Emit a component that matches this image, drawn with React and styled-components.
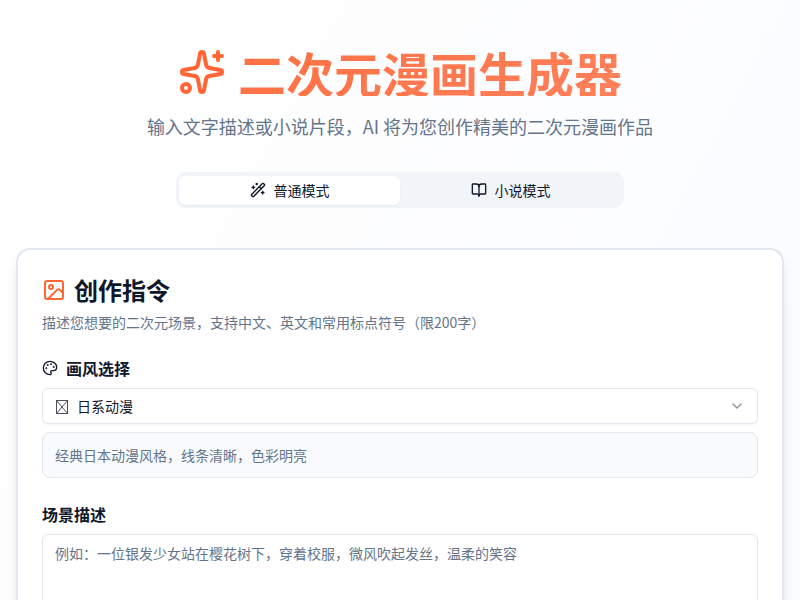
import React from "react";
import styled, { createGlobalStyle } from "styled-components";
import { Sparkles, WandSparkles, BookOpen, Image, Palette, ChevronDown } from "lucide-react";

const Global = createGlobalStyle`
  *, *::before, *::after { box-sizing: border-box; }
  html, body { margin: 0; height: 600px; overflow: hidden; }
  body {
    color: #0f172a;
    background: #fff;
    font-family: "Noto Sans CJK SC", sans-serif;
    font-size: 16px;
    line-height: 24px;
  }
  h1, h2, p { margin: 0; }
  svg { display: block; flex-shrink: 0; }
`;

const Page = styled.div`
  height: 600px;
  overflow: hidden;
  padding: 48px 16px 0;
  background: linear-gradient(to bottom right, #ffffff, #f8fafe) 0 0 / 100% 1500px no-repeat;
`;

const Header = styled.header`
  text-align: center;
`;

const Title = styled.h1`
  display: flex;
  align-items: center;
  justify-content: center;
  gap: 12px;
  height: 48px;
  font-size: 48px;
  line-height: 48px;
  font-weight: 700;
  background: linear-gradient(135deg, #ff6838, #ff8663);
  background-clip: text;
  color: transparent;
  svg { color: #ff6633; }
`;

const Subtitle = styled.p`
  margin-top: 16px;
  font-size: 18px;
  line-height: 28px;
  color: #64748b;
`;

const Tabs = styled.div`
  display: grid;
  grid-template-columns: 1fr 1fr;
  width: 448px;
  height: 36px;
  margin: 32px auto 40px;
  padding: 3.5px 3px 3px;
  border-radius: 10px;
  background: #f1f5f9;
`;

const Tab = styled.button`
  display: flex;
  align-items: center;
  justify-content: center;
  gap: 8px;
  border: 0;
  padding: 0;
  border-radius: 6px;
  font: 400 14px/20px "Noto Sans CJK SC", sans-serif;
  color: #0f172a;
  background: ${(p) => (p.$active ? "#fff" : "transparent")};
  box-shadow: ${(p) => (p.$active ? "0 1px 2px rgba(0,0,0,.06)" : "none")};
`;

const Card = styled.section`
  height: 700px;
  padding: 24px;
  border: 2px solid #e2e8f0;
  border-radius: 14px;
  background: #fff;
  box-shadow: 0 10px 15px -3px rgba(0,0,0,.1), 0 4px 6px -4px rgba(0,0,0,.1);
`;

const CardTitle = styled.h2`
  display: flex;
  align-items: center;
  gap: 8px;
  font-size: 24px;
  line-height: 32px;
  svg { color: #ff6633; }
`;

const CardNote = styled.p`
  margin-top: 6px;
  font-size: 14px;
  line-height: 20px;
  color: #64748b;
`;

const Label = styled.div`
  display: flex;
  align-items: center;
  gap: 8px;
  margin-top: 24px;
  font-weight: 700;
  line-height: 24px;
`;

const Select = styled.button`
  display: flex;
  align-items: center;
  justify-content: space-between;
  width: 100%;
  height: 36px;
  margin-top: 8px;
  padding: 0 12px;
  border: 1px solid #e2e8f0;
  border-radius: 6px;
  background: #fff;
  color: #0f172a;
  font: 400 14px/20px "Noto Sans CJK SC", sans-serif;
  box-shadow: 0 1px 2px rgba(0,0,0,.05);
`;

const Option = styled.span`
  display: flex;
  align-items: center;
  gap: 8px;
`;

const Hint = styled.div`
  height: 46px;
  margin-top: 8px;
  padding: 12px;
  border: 1px solid #e2e8f0;
  border-radius: 8px;
  background: #f8fafc;
  color: #64748b;
  font-size: 14px;
  line-height: 20px;
`;

const TextArea = styled.textarea`
  display: block;
  width: 100%;
  height: 120px;
  margin-top: 8px;
  padding: 8px 12px;
  border: 1px solid #e2e8f0;
  border-radius: 6px;
  resize: none;
  font: 400 14px/20px "Noto Sans CJK SC", sans-serif;
  &::placeholder { color: #64748b; }
`;

const StyleGlyph = () => (
  <svg width="14" height="16" viewBox="0 0 14 16" fill="none" stroke="#0f172a" strokeWidth="0.75">
    <path d="M1.5 2.5h11v13h-11zM1.5 2.5l11 13M12.5 2.5l-11 13" />
  </svg>
);

export default function App() {
  return (
    <Page>
      <Global />
      <Header>
        <Title>
          <Sparkles size={48} />
          二次元漫画生成器
        </Title>
        <Subtitle>输入文字描述或小说片段，AI 将为您创作精美的二次元漫画作品</Subtitle>
      </Header>
      <Tabs>
        <Tab $active><WandSparkles size={16} />普通模式</Tab>
        <Tab><BookOpen size={16} />小说模式</Tab>
      </Tabs>
      <Card>
        <CardTitle><Image size={24} />创作指令</CardTitle>
        <CardNote>描述您想要的二次元场景，支持中文、英文和常用标点符号（限200字）</CardNote>
        <Label><Palette size={16} />画风选择</Label>
        <Select><Option><StyleGlyph />日系动漫</Option><ChevronDown size={16} color="#8a8f99" /></Select>
        <Hint>经典日本动漫风格，线条清晰，色彩明亮</Hint>
        <Label>场景描述</Label>
        <TextArea placeholder="例如：一位银发少女站在樱花树下，穿着校服，微风吹起发丝，温柔的笑容" />
      </Card>
    </Page>
  );
}
